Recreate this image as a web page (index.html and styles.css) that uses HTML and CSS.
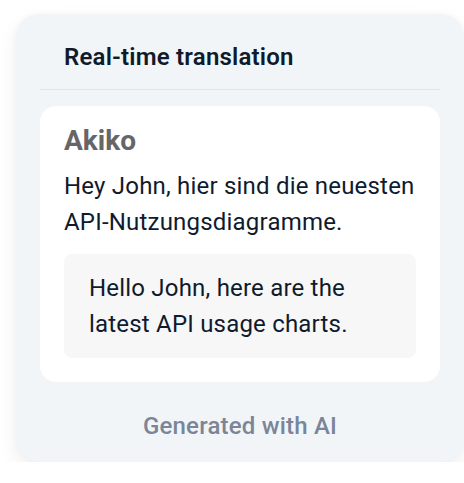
FILE: index.html
```html
<!DOCTYPE html>
<html lang="en">
<head>
<meta charset="utf-8">
<title>Real-time translation</title>
<link rel="stylesheet" href="styles.css">
</head>
<body>
  <div class="card">
    <div class="card-header">
      <h2 class="title">Real-time translation</h2>
    </div>
    <div class="message">
      <div class="sender">Akiko</div>
      <p class="original">Hey John, hier sind die neuesten API-Nutzungsdiagramme.</p>
      <div class="translation">
        <p class="translated">Hello John, here are the latest API usage charts.</p>
      </div>
    </div>
    <div class="footer">Generated with AI</div>
  </div>
</body>
</html>
```
FILE: styles.css
```css
html, body {
  margin: 0;
  padding: 0;
  background: #ffffff;
}
body {
  padding: 14px 0 0 16px;
  font-family: Roboto, "Liberation Sans", Arial, sans-serif;
}
.card {
  width: 448px;
  height: 448px;
  box-sizing: border-box;
  background: #f2f5f7;
  border-radius: 24px;
  padding: 0 24px;
  box-shadow: 0 8px 20px rgba(20, 30, 50, 0.07), 0 0 6px rgba(20, 30, 50, 0.03);
}
.card-header {
  padding: 28px 24px 17px;
  border-bottom: 1px solid #dfe4e8;
}
.title {
  margin: 0;
  font-size: 24px;
  line-height: 30px;
  font-weight: 600;
  letter-spacing: 0.2px;
  color: #0f1b2d;
}
.message {
  margin-top: 16px;
  background: #ffffff;
  border-radius: 16px;
  padding: 19px 24px 24px;
}
.sender {
  font-size: 28px;
  line-height: 32px;
  font-weight: 700;
  color: #666666;
  margin-bottom: 11px;
}
.original {
  margin: 0;
  font-size: 24px;
  line-height: 36px;
  letter-spacing: 0.2px;
  color: #0f1b2d;
}
.translation {
  margin-top: 14px;
  background: #f7f7f8;
  border-radius: 8px;
  padding: 16px 24px 16px 25px;
}
.translated {
  margin: 0;
  font-size: 24px;
  line-height: 36px;
  letter-spacing: 0.2px;
  color: #0f1b2d;
}
.footer {
  margin-top: 26px;
  text-align: center;
  font-size: 24px;
  line-height: 36px;
  font-weight: 500;
  letter-spacing: 0.2px;
  color: #7b8597;
}
```
